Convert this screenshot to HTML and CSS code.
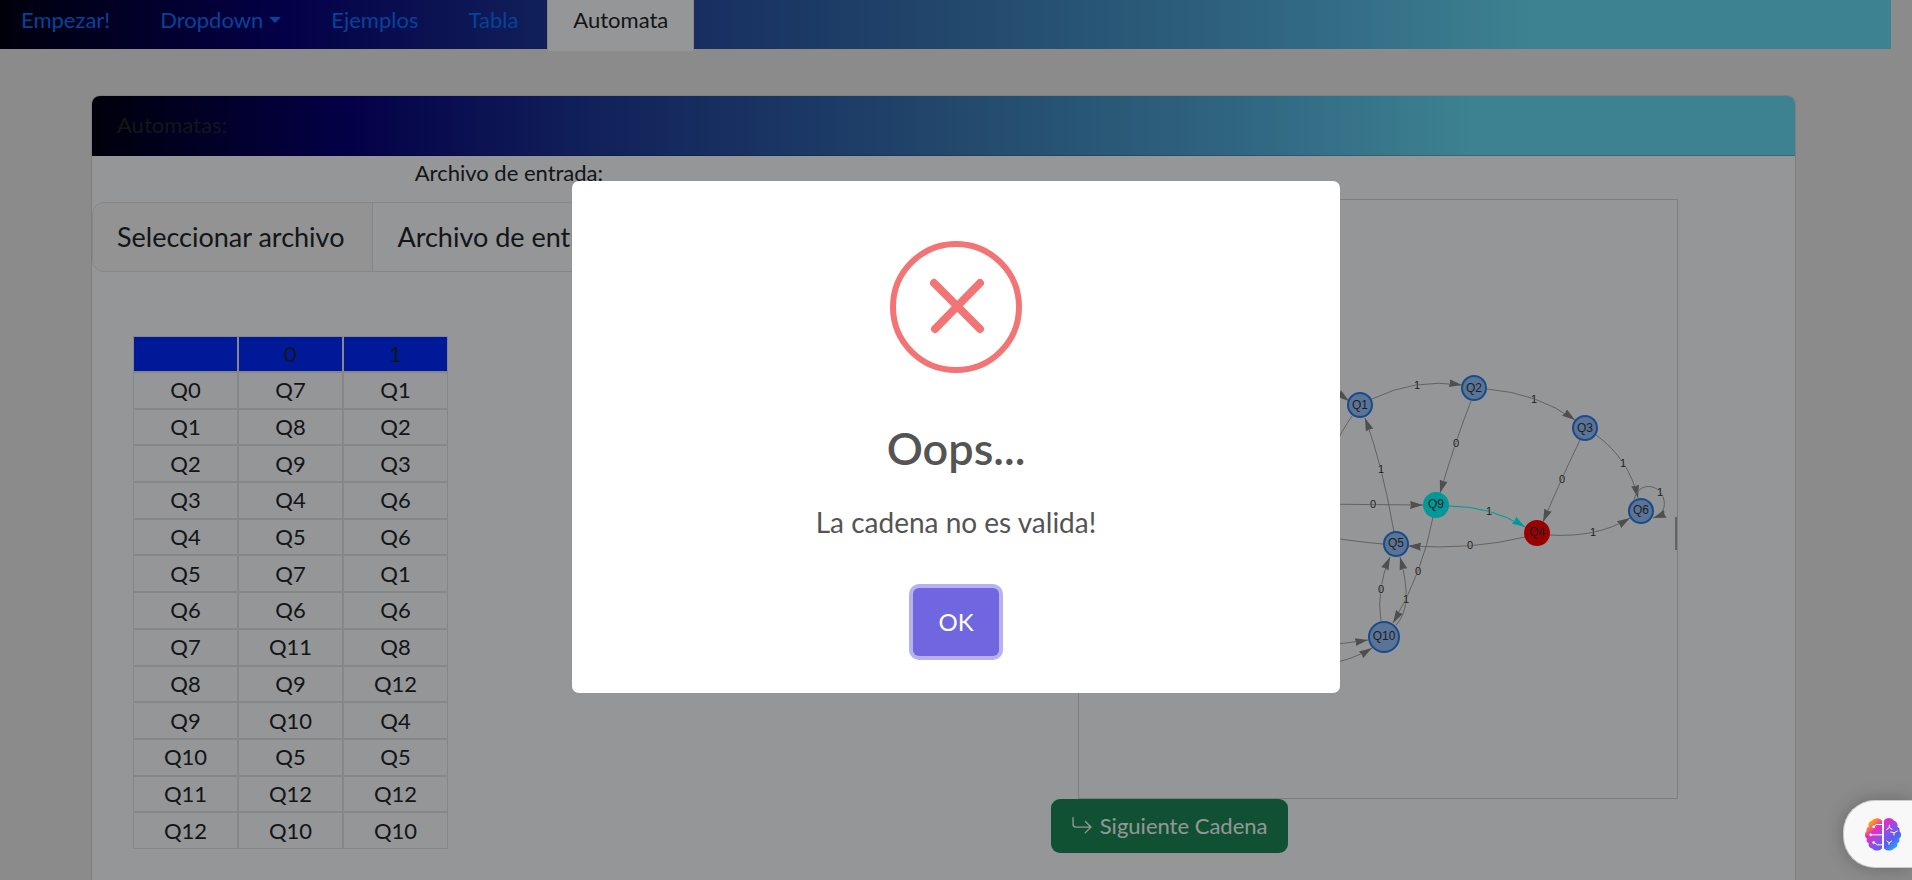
FILE: index.html
```html
<!DOCTYPE html>
<html lang="es">
<head>
<meta charset="utf-8">
<title>Automatas</title>
<link rel="stylesheet" href="styles.css">
</head>
<body>
<nav class="navbar">
  <a class="nav-link" href="#">Empezar!</a>
  <a class="nav-link nav-dropdown" href="#">Dropdown</a>
  <a class="nav-link" href="#">Ejemplos</a>
  <a class="nav-link" href="#">Tabla</a>
  <a class="nav-link nav-active" href="#" aria-current="page">Automata</a>
</nav>

<main class="card">
  <header class="card-header">Automatas:</header>
  <div class="card-body">
    <section class="input-column">
      <label class="file-title" for="archivo">Archivo de entrada:</label>
      <label class="file-box">
        <input class="file-input" type="file" id="archivo">
        <span class="file-button">Seleccionar archivo</span>
        <span class="file-name">Archivo de entrada</span>
      </label>
      <table class="states">
        <thead><tr><th></th><th>0</th><th>1</th></tr></thead>
        <tbody>
          <tr><td>Q0</td><td>Q7</td><td>Q1</td></tr>
          <tr><td>Q1</td><td>Q8</td><td>Q2</td></tr>
          <tr><td>Q2</td><td>Q9</td><td>Q3</td></tr>
          <tr><td>Q3</td><td>Q4</td><td>Q6</td></tr>
          <tr><td>Q4</td><td>Q5</td><td>Q6</td></tr>
          <tr><td>Q5</td><td>Q7</td><td>Q1</td></tr>
          <tr><td>Q6</td><td>Q6</td><td>Q6</td></tr>
          <tr><td>Q7</td><td>Q11</td><td>Q8</td></tr>
          <tr><td>Q8</td><td>Q9</td><td>Q12</td></tr>
          <tr><td>Q9</td><td>Q10</td><td>Q4</td></tr>
          <tr><td>Q10</td><td>Q5</td><td>Q5</td></tr>
          <tr><td>Q11</td><td>Q12</td><td>Q12</td></tr>
          <tr><td>Q12</td><td>Q10</td><td>Q10</td></tr>
        </tbody>
      </table>
    </section>
    <section class="graph-column">
      <svg class="graph" viewBox="0 0 598 598" role="img" aria-label="Grafo del automata">
        <defs>
          <marker id="arrow" markerUnits="userSpaceOnUse" markerWidth="14" markerHeight="10" refX="13" refY="5" orient="auto"><path d="M0 1 13 5 0 9 1 5Z" fill="#848484"/></marker>
          <marker id="arrow-active" markerUnits="userSpaceOnUse" markerWidth="14" markerHeight="10" refX="13" refY="5" orient="auto"><path d="M0 1 13 5 0 9 1 5Z" fill="#00ffff"/></marker>
        </defs>
        <g class="edges">
          <path d="M235 186Q255 190 270 201"/>
          <path d="M293 199Q336 178 383 185"/>
          <path d="M408 189Q458 193 496 220"/>
          <path d="M517 235Q550 259 559 298"/>
          <path d="M392 201Q377 239 361 293"/>
          <path d="M501 240Q483 277 464 322"/>
          <path class="edge-active" d="M369 306Q412 306 446 327"/>
          <path d="M470 335Q518 338 551 318"/>
          <path d="M446 337Q394 350 329 346"/>
          <path d="M315 332Q303 263 286 218"/>
          <path d="M230 304L344 305"/>
          <path d="M354 317Q344 372 314 423"/>
          <path d="M302 421Q297 389 311 357"/>
          <path d="M317 425Q335 407 321 357"/>
          <path d="M240 445Q265 444 289 440"/>
          <path d="M240 466Q272 461 293 448"/>
          <path d="M555 300C559 281 580 284 584 297C588 307 583 315 574 318"/>
          <path class="edge-plain" d="M304 344Q280 342 240 336"/>
          <path class="edge-plain" d="M273 216Q265 227 250 256"/>
        </g>
        <g class="nodes">
          <circle cx="281" cy="205" r="12"/><circle cx="395" cy="188" r="12"/>
          <circle cx="506" cy="228" r="12"/><circle cx="562" cy="311" r="12"/>
          <circle cx="317" cy="344" r="12"/><circle cx="305" cy="437" r="15"/>
          <circle class="node-current" cx="357" cy="305" r="12"/>
          <circle class="node-final" cx="458" cy="333" r="12"/>
        </g>
        <g class="node-labels">
          <text x="281" y="209">Q1</text><text x="395" y="192">Q2</text>
          <text x="506" y="232">Q3</text><text x="562" y="314">Q6</text>
          <text x="317" y="347">Q5</text><text x="305" y="440">Q10</text>
          <text x="357" y="308">Q9</text><text x="458" y="336">Q4</text>
        </g>
        <g class="edge-labels">
          <text x="338" y="189">1</text><text x="455" y="203">1</text>
          <text x="544" y="267">1</text><text x="581" y="296">1</text>
          <text x="377" y="247">0</text><text x="483" y="283">0</text>
          <text x="410" y="315">1</text><text x="514" y="336">1</text>
          <text x="391" y="349">0</text><text x="302" y="273">1</text>
          <text x="294" y="308">0</text><text x="339" y="375">0</text>
          <text x="302" y="393">0</text><text x="327" y="403">1</text>
        </g>
        <path class="graph-caret" d="M597 317V350"/>
      </svg>
      <button class="next-button" type="button">
        <svg class="next-icon" viewBox="0 0 16 16" aria-hidden="true"><path fill-rule="evenodd" d="M1.500 1.500A.5.5 0 0 0 1 2v4.800a2.500 2.500 0 0 0 2.500 2.500h9.793l-3.347 3.346a.5.5 0 0 0 .708.708l4.200-4.200a.5.5 0 0 0 0-.708l-4-4a.5.5 0 0 0-.708.708L13.293 8.300H3.500A1.500 1.500 0 0 1 2 6.800V2a.5.5 0 0 0-.5-.5z"/></svg>
        Siguiente Cadena
      </button>
    </section>
  </div>
</main>

<div class="overlay">
  <div class="modal" role="dialog" aria-modal="true" aria-labelledby="modal-title">
    <svg class="modal-icon" viewBox="0 0 132 132" aria-hidden="true"><circle cx="66" cy="66" r="63"/><path d="M44 42 90 88M90 42 45 88"/></svg>
    <h2 class="modal-title" id="modal-title">Oops...</h2>
    <p class="modal-text">La cadena no es valida!</p>
    <button class="modal-button" type="button">OK</button>
  </div>
</div>

<button class="assistant" type="button" aria-label="Asistente">
  <svg class="assistant-icon" viewBox="0 0 108 98" aria-hidden="true">
    <defs><linearGradient id="brain" x1="0" y1="0" x2="1" y2="1"><stop offset="0.160" stop-color="#ff9a1f"/><stop offset="0.320" stop-color="#e82cc0"/><stop offset="0.540" stop-color="#8a50ee"/><stop offset="0.720" stop-color="#5560f5"/><stop offset="0.880" stop-color="#26a5fa"/></linearGradient></defs>
    <path fill="url(#brain)" d="M51 8V90C46 99 26 100 22 91C13 90 9 82 11 75C4 71 4 66 6 62C-2 56-2 44 5 39C3 33 6 28 11 26C8 17 13 9 20 8C26-2 46-3 51 8ZM57 8C62-3 81-3 87 8C95 10 100 18 97 26C103 29 105 34 103 39C110 44 110 56 102 62C105 68 102 73 97 75C99 83 94 89 87 91C80 100 62 99 57 90Z"/>
    <path class="brain-lines" d="M51 19H34L26 26M51 50H17M51 80H37L27 73M73 20V28L64 35M73 28 82 34M87 52V44L76 41M87 44 98 38M72 80V74L65 68M72 74 81 68"/>
    <g fill="#fff"><circle cx="26" cy="26" r="4"/><circle cx="17" cy="50" r="4"/><circle cx="26" cy="73" r="4"/></g>
  </svg>
</button>
</body>
</html>
```
FILE: styles.css
```css
* { box-sizing: border-box; }

html { height: 100%; }

body {
  margin: 0;
  height: 100%;
  overflow: hidden;
  background: #e8e8e8;
  color: #212529;
  font-family: Lato, "Open Sans", sans-serif;
  font-size: 22px;
  line-height: 36px;
}

button { font: inherit; cursor: pointer; }

.navbar,
.card-header {
  background: linear-gradient(90deg, #000014 0%, #070078 15%, #1d3696 29%, #3c7db7 52%, #53afdc 69%, #66d9f2 81%);
}

.navbar {
  display: flex;
  height: 49px;
  margin-right: 21px;
}

.nav-link {
  display: flex;
  align-items: center;
  height: 51px;
  padding: 0 25px 11px;
  color: #0d6efd;
  text-decoration: none;
}

.nav-link:first-child { padding-left: 21px; }

.nav-dropdown::after {
  content: "";
  margin-left: 6px;
  border: 6px solid transparent;
  border-top-color: currentColor;
  border-bottom: 0;
}

.nav-active {
  margin-left: 4px;
  border: 1px solid #dee2e6;
  border-width: 0 1px;
  background: #f8fafc;
  color: #212529;
}

.card {
  margin: 46px 116px 0 91px;
  border: 1px solid #d2d3d4;
  border-radius: 9px;
  background: #f8fafc;
}

.card-header {
  padding: 11px 25px 12px;
  border-bottom: 1px solid rgba(0, 0, 0, 0.18);
  border-radius: 8px 8px 0 0;
}

.card-body {
  display: grid;
  grid-template-columns: 563fr 437fr;
  min-height: 760px;
}

.input-column { padding-right: 125px; }

.file-title {
  display: block;
  line-height: 34px;
  text-align: center;
}

.file-box {
  display: flex;
  position: relative;
  margin-top: 12px;
  border: 1px solid #dcdfe3;
  border-radius: 12px;
  font-size: 27px;
  line-height: 68px;
}

.file-input {
  position: absolute;
  inset: 0;
  width: 100%;
  height: 100%;
  opacity: 0;
}

.file-button {
  padding: 0 28px 0 24px;
  border-right: 1px solid #dcdfe3;
  border-radius: 12px 0 0 12px;
  background: #f6f6f6;
}

.file-name { padding: 0 24px; }

.states {
  width: 315px;
  height: 513px;
  margin: 64px 0 0 41px;
  border-spacing: 0;
  table-layout: fixed;
  text-align: center;
  line-height: 34px;
}

.states th,
.states td {
  padding: 0;
  border: 1px solid #e0e2e5;
  font-weight: 400;
}

.states th { background: #002aff; background-clip: padding-box; }

.graph-column { padding-top: 43px; }

.graph {
  display: block;
  width: 600px;
  height: 600px;
  margin-left: 27px;
  border: 1px solid #d3d3d3;
}

.edges path { fill: none; stroke: #a4a4a4; stroke-width: 1; marker-end: url(#arrow); }
.edges .edge-active { stroke: #00ffff; marker-end: url(#arrow-active); }
.edges .edge-plain { marker-end: none; }

.nodes circle { fill: #97c2fc; stroke: #2b7ce9; stroke-width: 1; }
.nodes .node-current { fill: #00ffff; stroke: #00ffff; }
.nodes .node-final { fill: #ff0000; stroke: #ff0000; }

.node-labels,
.edge-labels {
  font-family: "Liberation Sans", Arial, sans-serif;
  text-anchor: middle;
  fill: #343434;
}

.node-labels { font-size: 12px; }

.edge-labels {
  font-size: 11px;
  stroke: #f8fafc;
  stroke-width: 1;
  paint-order: stroke;
}

.nodes circle { stroke-width: 2; }

.graph-caret { stroke: #555555; stroke-width: 1; }

.next-button {
  display: flex;
  align-items: center;
  gap: 7px;
  padding: 9px 21px 9px 20px;
  border: 0;
  border-radius: 9px;
  background: #198754;
  color: #f8fafc;
}

.next-icon { width: 22px; height: 22px; fill: currentColor; }

.overlay {
  position: fixed;
  inset: 0;
  display: flex;
  align-items: center;
  justify-content: center;
  padding-bottom: 6px;
  background: rgba(0, 0, 0, 0.4);
}

.modal {
  display: flex;
  flex-direction: column;
  align-items: center;
  width: 768px;
  padding: 60px 24px 37px;
  border-radius: 7px;
  background: #ffffff;
  color: #545454;
}

.modal-icon { width: 132px; height: 132px; fill: none; stroke: #f27474; }
.modal-icon circle { stroke-width: 6; }
.modal-icon path { stroke-width: 8; stroke-linecap: round; }

.modal-title {
  margin: 48px 0 0;
  font-size: 45px;
  font-weight: 600;
  line-height: 54px;
}

.modal-text {
  margin: 27px 0 0;
  font-size: 28px;
  line-height: 40px;
}

.modal-button {
  margin-top: 46px;
  padding: 16px 25px;
  border: 0;
  border-radius: 6px;
  background: #7066e0;
  box-shadow: 0 0 0 4px rgba(112, 102, 224, 0.5);
  color: #ffffff;
  font-size: 24px;
}

.assistant {
  position: fixed;
  right: 0;
  bottom: 12px;
  display: flex;
  align-items: center;
  height: 68px;
  padding: 0 11px 0 21px;
  border: 1px solid #cccccc;
  border-right: 0;
  border-radius: 32px 0 0 32px;
  background: #f8f8f8;
  box-shadow: 0 0 18px rgba(0, 0, 0, 0.25);
}

.assistant-icon { width: 36px; height: 33px; }

.brain-lines { fill: none; stroke: #ffffff; stroke-width: 3; }
```
